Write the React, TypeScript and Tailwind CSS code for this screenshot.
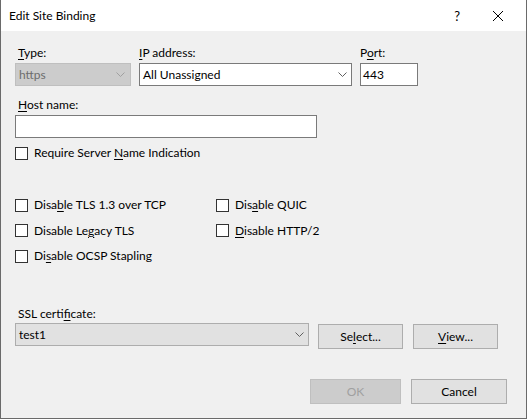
import React from "react";

const Chevron = ({ color = "#606060" }: { color?: string }) => (
  <svg width="9" height="5" viewBox="0 0 9 5" className="shrink-0">
    <polyline points="0.5,0.5 4.5,4.5 8.5,0.5" fill="none" stroke={color} strokeWidth="1" />
  </svg>
);

const Check = ({ label }: { label: React.ReactNode }) => (
  <div className="flex h-[16px] items-center">
    <div className="h-[13px] w-[13px] shrink-0 border border-[#333333] bg-white" />
    <span className="ml-[6px] leading-[16px]">{label}</span>
  </div>
);

const U = ({ children }: { children: React.ReactNode }) => (
  <span className="underline underline-offset-2 decoration-1">{children}</span>
);

export default function App() {
  return (
    <div
      className="flex h-[419px] w-[527px] flex-col border-x border-b border-[#6a6a6a] text-[12px] text-black"
      style={{ fontFamily: 'Lato, "Noto Sans", sans-serif' }}
    >
      <div className="flex h-[31px] shrink-0 items-center bg-white pl-[8px]">
        <span className="leading-[16px]">Edit Site Binding</span>
        <div className="ml-auto flex items-center">
          <span className="mr-[33px] text-[13px] leading-[16px]">?</span>
          <svg width="10" height="10" viewBox="0 0 10 10" className="mr-[23px]">
            <line x1="0" y1="0" x2="10" y2="10" stroke="#000" strokeWidth="1" />
            <line x1="10" y1="0" x2="0" y2="10" stroke="#000" strokeWidth="1" />
          </svg>
        </div>
      </div>

      <div className="flex flex-1 flex-col bg-[#f0f0f0] pl-[14px] pr-[19px] pt-[14px]">
        {/* Row 1 */}
        <div className="flex gap-[8px]">
          <div className="flex w-[116px] flex-col">
            <span className="pl-[3px] leading-[16px]">
              <U>T</U>ype:
            </span>
            <div className="mt-[2px] flex h-[23px] items-center justify-between border border-[#bfbfbf] bg-[#cccccc] pl-[3px] pr-[5px] text-[#6d6d6d]">
              <span>https</span>
              <Chevron color="#a0a0a0" />
            </div>
          </div>
          <div className="flex w-[213px] flex-col">
            <span className="leading-[16px]">
              <U>I</U>P address:
            </span>
            <div className="mt-[2px] flex h-[23px] items-center justify-between border border-[#7a7a7a] bg-white pl-[3px] pr-[4px]">
              <span>All Unassigned</span>
              <Chevron />
            </div>
          </div>
          <div className="flex w-[58px] flex-col">
            <span className="leading-[16px]">
              P<U>o</U>rt:
            </span>
            <div className="mt-[2px] flex h-[23px] items-center border border-[#7a7a7a] bg-white pl-[2px]">
              <span>443</span>
            </div>
          </div>
        </div>

        {/* Host name */}
        <span className="mt-[11px] pl-[3px] leading-[16px]">
          <U>H</U>ost name:
        </span>
        <div className="mt-[2px] h-[23px] w-[302px] border border-[#7a7a7a] bg-white" />

        <div className="mt-[7px]">
          <Check
            label={
              <>
                Require Server <U>N</U>ame Indication
              </>
            }
          />
        </div>

        {/* Disable options */}
        <div className="mt-[36px] grid grid-cols-[201px_1fr] gap-y-[9.5px]">
          <Check
            label={
              <>
                Disa<U>b</U>le TLS 1.3 over TCP
              </>
            }
          />
          <Check
            label={
              <>
                Dis<U>a</U>ble QUIC
              </>
            }
          />
          <Check
            label={
              <>
                Disable Le<U>g</U>acy TLS
              </>
            }
          />
          <Check
            label={
              <>
                <U>D</U>isable HTTP/2
              </>
            }
          />
          <Check
            label={
              <>
                Di<U>s</U>able OCSP Stapling
              </>
            }
          />
        </div>

        {/* SSL certificate */}
        <span className="mt-[42px] pl-[3px] leading-[16px]">
          SSL certi<U>f</U>icate:
        </span>
        <div className="mt-[1px] flex items-start">
          <div className="flex h-[23px] w-[294px] items-center justify-between border border-[#adadad] bg-[#e1e1e1] pl-[3px] pr-[4px]">
            <span>test1</span>
            <Chevron />
          </div>
          <button className="ml-[9px] mt-[1px] h-[25px] w-[85px] border border-[#adadad] bg-[#e1e1e1]">
            Se<U>l</U>ect...
          </button>
          <button className="ml-[10px] mt-[1px] h-[25px] w-[85px] border border-[#adadad] bg-[#e1e1e1]">
            <U>V</U>iew...
          </button>
        </div>

        {/* OK / Cancel */}
        <div className="mt-[30px] flex justify-end gap-[10px]">
          <button className="h-[25px] w-[91px] border border-[#bfbfbf] bg-[#cccccc] text-[#a0a0a0]">
            OK
          </button>
          <button className="h-[25px] w-[96px] border border-[#adadad] bg-[#e1e1e1]">Cancel</button>
        </div>
      </div>
    </div>
  );
}
